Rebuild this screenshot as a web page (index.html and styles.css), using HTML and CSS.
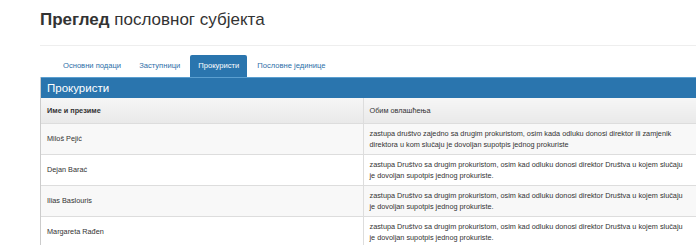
FILE: index.html
```html
<!DOCTYPE html>
<html lang="sr">
<head>
    <meta charset="UTF-8">
    <title>Преглед пословног субјекта</title>
    <link rel="stylesheet" href="styles.css">
</head>
<body>
    <div class="container">
        <h1 class="page-title"><strong>Преглед</strong> пословног субјекта</h1>

        <ul class="tabs">
            <li class="tab">Основни подаци</li>
            <li class="tab">Заступници</li>
            <li class="tab active">Прокуристи</li>
            <li class="tab">Пословне јединице</li>
        </ul>

        <div class="panel">
            <div class="panel-heading">Прокуристи</div>
            <table>
                <thead>
                    <tr>
                        <th class="col-name">Име и презиме</th>
                        <th>Обим овлашћења</th>
                    </tr>
                </thead>
                <tbody>
                    <tr>
                        <td>Miloš Pejić</td>
                        <td>zastupa društvo zajedno sa drugim prokuristom, osim kada odluku donosi direktor ili zamjenik direktora u kom slučaju je dovoljan supotpis jednog prokuriste</td>
                    </tr>
                    <tr>
                        <td>Dejan Barać</td>
                        <td>zastupa Društvo sa drugim prokuristom, osim kad odluku donosi direktor Društva u kojem slučaju je dovoljan supotpis jednog prokuriste.</td>
                    </tr>
                    <tr>
                        <td>Ilias Baslouris</td>
                        <td>zastupa Društvo sa drugim prokuristom, osim kad odluku donosi direktor Društva u kojem slučaju je dovoljan supotpis jednog prokuriste.</td>
                    </tr>
                    <tr>
                        <td>Margareta Rađen</td>
                        <td>zastupa Društvo sa drugim prokuristom, osim kad odluku donosi direktor Društva u kojem slučaju je dovoljan supotpis jednog prokuriste.</td>
                    </tr>
                </tbody>
            </table>
        </div>
    </div>
</body>
</html>
```

FILE: styles.css
```css
* {
    margin: 0;
    padding: 0;
    box-sizing: border-box;
}

html, body {
    overflow: hidden;
}

body {
    font-family: "Liberation Sans", Arial, sans-serif;
    background: #fff;
    color: #333;
    width: 696px;
    height: 245px;
}

.container {
    width: 656px;
    margin-left: 40px;
    padding-top: 10px;
}

.page-title {
    font-size: 17px;
    font-weight: normal;
    color: #333;
    line-height: 20px;
    padding-bottom: 15px;
    border-bottom: 1px solid #eee;
}

.page-title strong {
    font-weight: bold;
}

.tabs {
    list-style: none;
    display: flex;
    margin-top: 9px;
    padding-left: 15px;
}

.tab {
    font-size: 7.6px;
    color: #2d6ea8;
    padding: 0 8px;
    height: 22px;
    line-height: 22px;
    margin-right: 2px;
}

.active {
    background: #2a75ae;
    color: #fff;
    border-radius: 2px 2px 0 0;
}

.panel {
    border-left: 1px solid #ccc;
}

.panel-heading {
    background: #2a75ae;
    color: #fff;
    font-size: 11.5px;
    height: 21px;
    line-height: 21px;
    padding-left: 6px;
    border-top: 1px solid #5b9fd0;
}

table {
    width: 100%;
    border-collapse: collapse;
    font-size: 7.3px;
}

th, td {
    text-align: left;
    vertical-align: middle;
    padding: 4px 6px;
    border-bottom: 1px solid #ddd;
    line-height: 11px;
}

th {
    height: 25px;
    background: linear-gradient(#f6f6f6, #e9e9e9);
    font-weight: normal;
}

th.col-name {
    font-weight: bold;
}

th + th, td + td {
    border-left: 1px solid #ddd;
}

.col-name {
    width: 322px;
}

td {
    height: 30.5px;
}

tbody tr:nth-child(odd) {
    background: #f8f8f8;
}
```
